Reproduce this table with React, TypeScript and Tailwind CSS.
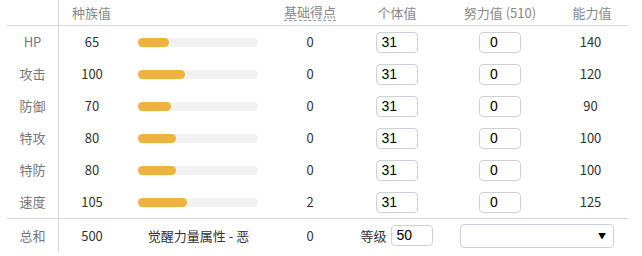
import React from "react";

const stats = [
  { name: "HP", base: 65, ev: 0, iv: 31, eff: 0, val: 140 },
  { name: "攻击", base: 100, ev: 0, iv: 31, eff: 0, val: 120 },
  { name: "防御", base: 70, ev: 0, iv: 31, eff: 0, val: 90 },
  { name: "特攻", base: 80, ev: 0, iv: 31, eff: 0, val: 100 },
  { name: "特防", base: 80, ev: 0, iv: 31, eff: 0, val: 100 },
  { name: "速度", base: 105, ev: 2, iv: 31, eff: 0, val: 125 },
];

const grid = "grid grid-cols-[52px_66px_145px_80px_94px_112px_72px] items-center";
const font = { fontFamily: '"Noto Sans CJK SC", "Noto Sans", sans-serif' };

function Box({ v, pad = "pl-[5px]" }: { v: number; pad?: string }) {
  return (
    <div
      className={`w-[42px] h-[21px] border border-[#ccd0d7] rounded-[4px] bg-white ${pad} flex items-center text-[14px] text-black`}
      style={{ fontFamily: '"Liberation Sans", Arial, sans-serif' }}
    >
      {v}
    </div>
  );
}

export default function App() {
  return (
    <div className="w-[642px] h-[256px] bg-white text-[13px] text-[#333]" style={font}>
      <div className="ml-[7px] w-[621px]">
        <div className={`${grid} h-[26px] border-b border-[#d5d8de] text-[#888]`}>
          <div className="h-full border-r border-[#d5d8de]" />
          <div className="text-center pr-[1px]">种族值</div>
          <div />
          <div className="flex justify-center">
            <span className="border-b border-dashed border-[#999] leading-[16px]">基础得点</span>
          </div>
          <div className="text-center">个体值</div>
          <div className="text-center">努力值 (510)</div>
          <div className="text-center">能力值</div>
        </div>
        {stats.map((s) => (
          <div key={s.name} className={`${grid} h-[32px]`}>
            <div className="h-full border-r border-[#d5d8de] flex items-center justify-center text-[#777]">{s.name}</div>
            <div className="text-center">{s.base}</div>
            <div className="pl-[13px]">
              <div className="w-[120px] h-[9px] rounded-full bg-[#f2f2f2]">
                <div className="h-full rounded-full bg-[#efb33d]" style={{ width: `${(s.base / 255) * 120}px` }} />
              </div>
            </div>
            <div className="text-center">{s.ev}</div>
            <div className="flex justify-center pr-[1px]"><Box v={s.iv} /></div>
            <div className="flex justify-center"><Box v={s.eff} pad="pl-[10px]" /></div>
            <div className="text-center pr-[3px]">{s.val}</div>
          </div>
        ))}
        <div className="grid grid-cols-[52px_66px_145px_80px_94px_184px] items-center h-[34px] border-t border-[#d5d8de]">
          <div className="h-full border-r border-[#d5d8de] flex items-center justify-center text-[#777]">总和</div>
          <div className="text-center">500</div>
          <div className="text-center pl-[2px]">觉醒力量属性 - 恶</div>
          <div className="text-center">0</div>
          <div className="flex items-center justify-center gap-[4px] pr-[1px]">
            <span>等级</span>
            <Box v={50} />
          </div>
          <div className="flex justify-center pl-[2px]">
            <div className="w-[154px] h-[24px] border border-[#ccd0d7] rounded-[4px] bg-white flex items-center justify-end pr-[7px] text-[8px] text-black">
              ▼
            </div>
          </div>
        </div>
      </div>
    </div>
  );
}
